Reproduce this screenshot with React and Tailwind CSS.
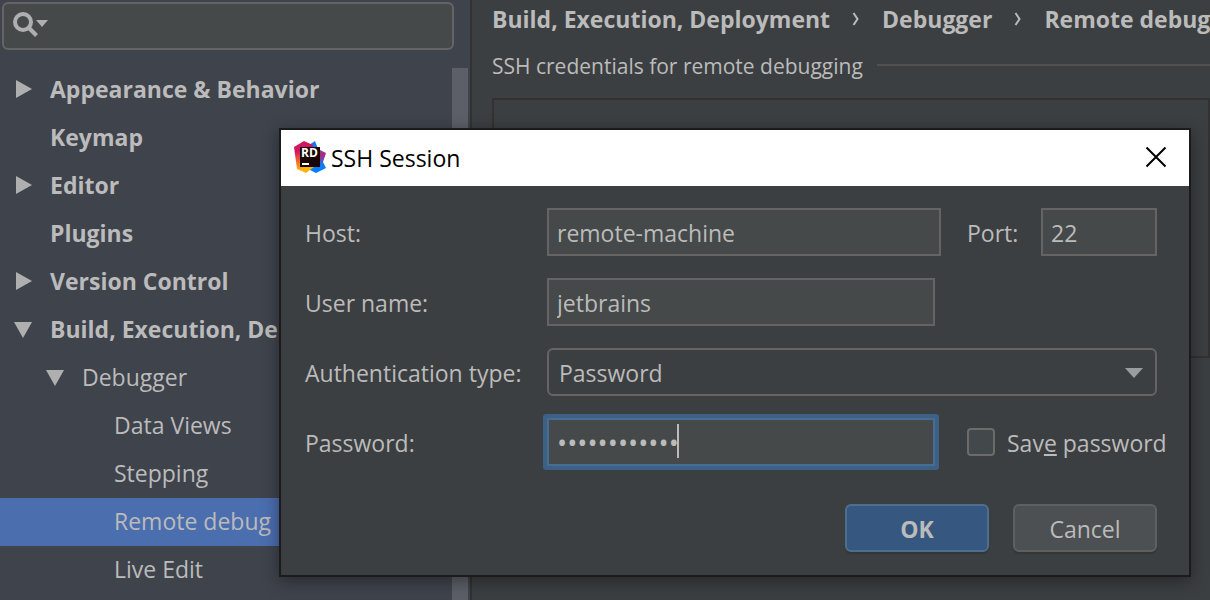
import React, { useState } from "react";

const tree = [
  { label: "Appearance & Behavior", level: 0, state: "closed" },
  { label: "Keymap", level: 0 },
  { label: "Editor", level: 0, state: "closed" },
  { label: "Plugins", level: 0 },
  { label: "Version Control", level: 0, state: "closed" },
  { label: "Build, Execution, Deployment", level: 0, state: "open" },
  { label: "Debugger", level: 1, state: "open" },
  { label: "Data Views", level: 2 },
  { label: "Stepping", level: 2 },
  { label: "Remote debug", level: 2, selected: true },
  { label: "Live Edit", level: 2 },
];

const indent = ["pl-[14px]", "pl-[46px]", "pl-[78px]"];

function Twisty({ state }) {
  return (
    <svg viewBox="0 0 18 18" className="h-[18px] w-[18px] shrink-0" fill="#afafaf" aria-hidden="true">
      {state === "closed" && <path d="M2 0L18 9L2 18Z" />}
      {state === "open" && <path d="M0 2H18L9 18Z" />}
    </svg>
  );
}

function TreeRow({ item }) {
  return (
    <li>
      <button
        type="button"
        className={`flex h-12 w-full items-center gap-[18px] pb-[2px] text-left whitespace-nowrap ${indent[item.level]} ${
          item.level === 0 ? "font-bold" : ""
        } ${item.selected ? "bg-[#4b6eaf]" : ""}`}
      >
        <Twisty state={item.state} />
        {item.label}
      </button>
    </li>
  );
}

function Sidebar() {
  return (
    <aside className="flex w-[472px] shrink-0 flex-col border-r-2 border-[#323232] bg-[#3f434c]">
      <label className="mt-[2px] mr-4 ml-[2px] flex h-12 shrink-0 items-center rounded-md border-2 border-[#646464] bg-[#45494a] pl-[9px]">
        <svg viewBox="0 0 36 26" className="mb-[2px] h-[26px] w-9 shrink-0" fill="none" aria-hidden="true">
          <circle cx="10" cy="10" r="8" stroke="#afafaf" strokeWidth="4" />
          <path d="M15.500 15.500L23.500 23.500" stroke="#afafaf" strokeWidth="4" />
          <path d="M23 8H35L29 15Z" fill="#afafaf" />
        </svg>
        <input type="text" aria-label="Search settings" className="min-w-0 flex-1 bg-transparent px-1 outline-none" />
      </label>
      <div className="mt-4 flex min-h-0 flex-1">
        <ul className="min-w-0 flex-1 overflow-hidden">
          {tree.map((item) => (
            <TreeRow key={item.label} item={item} />
          ))}
        </ul>
        <div className="mt-[2px] mr-[2px] w-4 shrink-0 bg-[#5c5f67]" />
      </div>
    </aside>
  );
}

function Chevron() {
  return (
    <svg viewBox="0 0 8 16" className="h-4 w-2 shrink-0" fill="none" aria-hidden="true">
      <path d="M1.500 2L5.500 8L1.500 14" stroke="#bbbbbb" strokeWidth="2" />
    </svg>
  );
}

function Content() {
  return (
    <main className="flex min-w-0 flex-1 flex-col overflow-hidden pl-5">
      <nav aria-label="Breadcrumb" className="flex h-10 shrink-0 items-center gap-[22px] pb-[2px] font-bold whitespace-nowrap">
        <a href="#build">Build, Execution, Deployment</a>
        <Chevron />
        <a href="#debugger">Debugger</a>
        <Chevron />
        <a href="#remote">Remote debug</a>
      </nav>
      <div className="mt-2 flex h-9 shrink-0 items-center gap-[14px]">
        <h2 className="text-[21px] whitespace-nowrap">SSH credentials for remote debugging</h2>
        <div className="mb-[2px] h-[2px] flex-1 bg-[#515151]" />
      </div>
      <div className="mt-[14px] h-[260px] shrink-0 border-2 border-[#323232]" />
    </main>
  );
}

function Logo() {
  return (
    <svg viewBox="0 0 32 32" className="mb-[2px] h-8 w-8 shrink-0" aria-hidden="true">
      <defs>
        <linearGradient id="warm" x1="0.3" y1="0" x2="0.4" y2="1">
          <stop offset="0.3" stopColor="#d3145f" />
          <stop offset="0.6" stopColor="#f0642f" />
          <stop offset="0.9" stopColor="#fdb60d" />
        </linearGradient>
        <linearGradient id="cool" x1="0" y1="0" x2="0" y2="1">
          <stop offset="0.2" stopColor="#087cfa" />
          <stop offset="0.42" stopColor="#c0206f" />
          <stop offset="0.75" stopColor="#087cfa" />
        </linearGradient>
      </defs>
      <path d="M15 4L21 0L24 8L32 12L29 21L32 27L22 32L14 28Z" fill="url(#cool)" />
      <path d="M0 6L10 0L19 4L20 26L12 32L3 28Z" fill="url(#warm)" />
      <path d="M6 6H26V26H6Z" fill="#1a0505" />
      <text x="7" y="16" fontSize="12" fontWeight="700" fontFamily="Open Sans, sans-serif" fill="#fff">
        RD
      </text>
      <path d="M8 22H15V24H8Z" fill="#fff" />
    </svg>
  );
}

const field = "h-12 min-w-0 border-2 border-[#646464] bg-[#45494a] px-2 pt-[2px] outline-none";

function FieldLabel({ htmlFor, children }) {
  return (
    <label htmlFor={htmlFor} className="pt-[2px] whitespace-nowrap">
      {children}
    </label>
  );
}

function SessionDialog() {
  const [password, setPassword] = useState("abcdefghijkl");
  return (
    <section
      role="dialog"
      aria-labelledby="title"
      className="absolute top-32 right-[19px] left-[279px] border-2 border-[#1b1b1c] bg-[#3c3f41] shadow-[0_4px_16px_rgba(0,0,0,0.4)]"
    >
      <header className="flex h-14 items-center gap-[5px] bg-white pr-[22px] pl-[13px] text-black">
        <Logo />
        <h1 id="title" className="flex-1">SSH Session</h1>
        <button type="button" aria-label="Close" className="mb-[2px]">
          <svg viewBox="0 0 22 22" className="h-[22px] w-[22px]" fill="none" aria-hidden="true">
            <path d="M1.500 1.500L20.500 20.500M20.500 1.500L1.500 20.500" stroke="#000" strokeWidth="2" />
          </svg>
        </button>
      </header>
      <form className="pt-[22px] pr-8 pb-[23px] pl-6">
        <div className="grid grid-cols-[242px_1fr] items-center gap-y-[22px]">
          <FieldLabel htmlFor="host">Host:</FieldLabel>
          <div className="flex items-center">
            <input id="host" type="text" defaultValue="remote-machine" className={`${field} flex-1`} />
            <div className="flex w-[216px] items-center justify-between pl-[26px]">
              <FieldLabel htmlFor="port">Port:</FieldLabel>
              <input id="port" type="text" defaultValue="22" className={`${field} w-[116px]`} />
            </div>
          </div>
          <FieldLabel htmlFor="user">User name:</FieldLabel>
          <input id="user" type="text" defaultValue="jetbrains" className={`${field} mr-[222px]`} />
          <FieldLabel htmlFor="auth">Authentication type:</FieldLabel>
          <div className="relative">
            <select
              id="auth"
              className="block h-12 w-full appearance-none rounded-md border-2 border-[#646464] bg-[#3c3f41] px-[10px] pt-[2px] outline-none"
            >
              <option>Password</option>
            </select>
            <svg viewBox="0 0 18 10" className="pointer-events-none absolute top-5 right-[14px] h-[10px] w-[18px]" fill="#9a9da0" aria-hidden="true">
              <path d="M0 0H18L9 10Z" />
            </svg>
          </div>
          <FieldLabel htmlFor="pass">Password:</FieldLabel>
          <div className="flex items-center">
            <div className="relative mr-8 min-w-0 flex-1">
              <input
                id="pass"
                type="password"
                value={password}
                onChange={(e) => setPassword(e.target.value)}
                className="block h-12 w-full rounded-[1px] border-2 border-[#466d94] bg-[#45494a] px-2 text-[27px] caret-transparent ring-4 ring-[#3d6185] outline-none"
              />
              <span className="absolute top-[6px] left-[130px] h-[34px] w-[2px] bg-[#bbbbbb]" />
            </div>
            <div className="flex w-[190px] items-center gap-3 whitespace-nowrap">
              <input
                id="save"
                type="checkbox"
                className="h-7 w-7 shrink-0 appearance-none rounded-sm border-2 border-[#6b6b6b] bg-[#43494a]"
              />
              <FieldLabel htmlFor="save">
                Sav<span className="underline decoration-2 underline-offset-2">e</span> password
              </FieldLabel>
            </div>
          </div>
        </div>
        <div className="mt-[38px] flex justify-end gap-6">
          <button type="button" className="h-12 w-36 rounded-md border-2 border-[#4c708c] bg-[#365880] pt-[2px] font-bold shadow-[0_2px_1px_rgba(0,0,0,0.15)]">
            OK
          </button>
          <button type="button" className="h-12 w-36 rounded-md border-2 border-[#5e6060] bg-[#4c5052] pt-[2px] shadow-[0_2px_1px_rgba(0,0,0,0.15)]">
            Cancel
          </button>
        </div>
      </form>
    </section>
  );
}

export default function App() {
  return (
    <div className="relative flex h-screen overflow-hidden bg-[#3c3f41] font-['Open_Sans','Noto_Sans',sans-serif] text-[23px] leading-8 text-[#bbbbbb]">
      <Sidebar />
      <Content />
      <SessionDialog />
    </div>
  );
}
